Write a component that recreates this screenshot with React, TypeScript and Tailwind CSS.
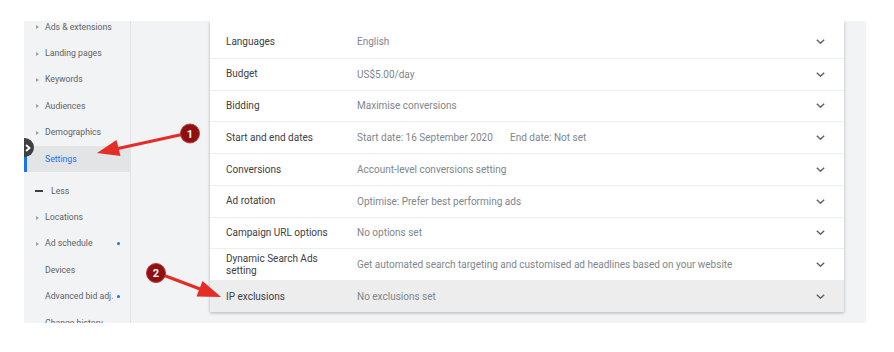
import React from "react";

type NavItem = { label: string; bullet?: boolean; dot?: boolean; active?: boolean; dash?: boolean };

const navTop: NavItem[] = [
  { label: "Ads & extensions", bullet: true },
  { label: "Landing pages", bullet: true },
  { label: "Keywords", bullet: true },
  { label: "Audiences", bullet: true },
  { label: "Demographics", bullet: true },
  { label: "Settings", active: true },
];

const navBottom: NavItem[] = [
  { label: "Less", dash: true },
  { label: "Locations", bullet: true },
  { label: "Ad schedule", bullet: true, dot: true },
  { label: "Devices" },
  { label: "Advanced bid adj.", dot: true },
  { label: "Change history" },
];

const rows: { label: string; value: React.ReactNode; hover?: boolean }[] = [
  { label: "Languages", value: "English" },
  { label: "Budget", value: "US$5.00/day" },
  { label: "Bidding", value: "Maximise conversions" },
  {
    label: "Start and end dates",
    value: (
      <span className="flex">
        <span className="w-[153px]">Start date: 16 September 2020</span>
        <span>End date: Not set</span>
      </span>
    ),
  },
  { label: "Conversions", value: "Account-level conversions setting" },
  { label: "Ad rotation", value: "Optimise: Prefer best performing ads" },
  { label: "Campaign URL options", value: "No options set" },
  {
    label: "Dynamic Search Ads setting",
    value: "Get automated search targeting and customised ad headlines based on your website",
  },
  { label: "IP exclusions", value: "No exclusions set", hover: true },
];

function Bullet() {
  return (
    <svg width="3" height="4" viewBox="0 0 3 4" className="mr-[6px] shrink-0">
      <path d="M0 0 L3 2 L0 4 Z" fill="#9aa0a6" />
    </svg>
  );
}

function NavRow({ item }: { item: NavItem }) {
  return (
    <div
      className={`relative flex h-[26.4px] items-center pr-[8px] text-[8.7px] ${
        item.active ? "bg-[#e3e4e6] text-[#1a73e8]" : "text-[#5f6368]"
      } ${item.bullet ? "pl-[12px]" : item.dash ? "pl-[11px]" : "pl-[21px]"}`}
    >
      {item.active && <div className="absolute left-0 top-0 h-full w-[3px] bg-[#1a73e8]" />}
      {item.bullet && <Bullet />}
      {item.dash && <span className="mr-[8px] h-[1.5px] w-[8px] bg-[#3c4043]" />}
      <span className="flex-1 whitespace-nowrap">{item.label}</span>
      {item.dot && <span className="mr-[2px] h-[3px] w-[3px] shrink-0 rounded-full bg-[#1a73e8]" />}
    </div>
  );
}

function Chevron() {
  return (
    <svg width="9" height="5" viewBox="0 0 9 5">
      <path d="M0.8 0.8 L4.5 4.2 L8.2 0.8" fill="none" stroke="#5f6368" strokeWidth="1.5" />
    </svg>
  );
}

export default function App() {
  return (
    <div
      className="relative h-[352px] w-[894px] overflow-hidden bg-white pl-[24px] pt-[21px]"
      style={{ fontFamily: "Roboto, 'Liberation Sans', sans-serif" }}
    >
      <div className="flex h-[302px] w-[842px] overflow-hidden bg-[#f1f3f4]">
        {/* Sidebar */}
        <div className="relative w-[107px] shrink-0 overflow-hidden border-r border-[#e0e2e4]">
          <div className="-mt-[7px]">
            {navTop.map((n) => (
              <NavRow key={n.label} item={n} />
            ))}
            <div className="h-[5.6px]" />
            {navBottom.map((n) => (
              <NavRow key={n.label} item={n} />
            ))}
          </div>
          {/* collapse toggle */}
          <div className="absolute left-[-9px] top-[117px] flex h-[19px] w-[19px] items-center justify-end rounded-full bg-[#3c4043] pr-[3px]">
            <svg width="6" height="8" viewBox="0 0 6 8">
              <path d="M1 1 L4.5 4 L1 7" fill="none" stroke="white" strokeWidth="1.8" />
            </svg>
          </div>
        </div>

        {/* Main */}
        <div className="flex-1 pl-[79px] pr-[22px]">
          <div className="bg-white pt-[5px] shadow-[0_1px_3px_rgba(60,64,67,0.35)]">
            {rows.map((r, i) => (
              <div
                key={r.label}
                className={`flex h-[31.75px] items-center pl-[16px] pr-[19px] text-[10px] ${
                  i > 0 ? "border-t border-[#eceef0]" : ""
                } ${r.hover ? "bg-[#ededed]" : ""}`}
              >
                <div className="w-[131px] shrink-0 pr-[14px] leading-[11.5px] text-[#3c4043]">{r.label}</div>
                <div className="flex-1 whitespace-nowrap text-[#80868b]">{r.value}</div>
                <Chevron />
              </div>
            ))}
          </div>
        </div>
      </div>

      {/* Annotations */}
      <svg className="absolute inset-0" width="894" height="352" viewBox="0 0 894 352">
        <line x1="182" y1="134.5" x2="118" y2="148.5" stroke="#e52d27" strokeWidth="3" strokeLinecap="round" />
        <polygon points="97,153 120.5,156 116.5,140" fill="#e52d27" />
        <circle cx="190" cy="133.5" r="9.5" fill="#8e1010" stroke="#b83a3a" strokeWidth="1" />
        <text x="190" y="137.5" textAnchor="middle" fontSize="11" fontWeight="bold" fill="white" fontFamily="Roboto, sans-serif">
          1
        </text>

        <line x1="163" y1="275" x2="200" y2="289" stroke="#e52d27" strokeWidth="3" strokeLinecap="round" />
        <polygon points="221,297 196.5,296.5 202.5,281" fill="#e52d27" />
        <circle cx="156" cy="273" r="9.5" fill="#8e1010" stroke="#b83a3a" strokeWidth="1" />
        <text x="156" y="277" textAnchor="middle" fontSize="11" fontWeight="bold" fill="white" fontFamily="Roboto, sans-serif">
          2
        </text>
      </svg>
    </div>
  );
}
